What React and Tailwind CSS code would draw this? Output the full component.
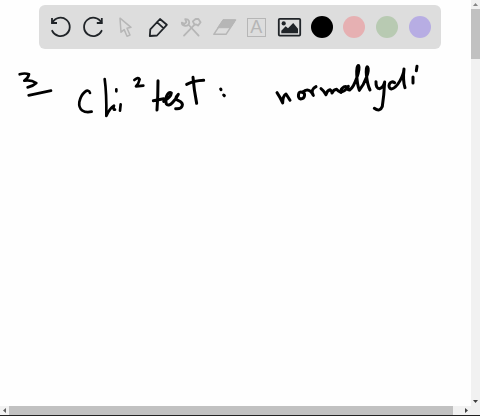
import React from "react";

const muted = "text-[#b6b6b6]";
const dark = "text-[#202428]";

function Icon({ children }) {
  return (
    <svg
      viewBox="0 0 24 24"
      className="size-6 overflow-visible"
      fill="none"
      stroke="currentColor"
      strokeWidth="1.8"
      strokeLinecap="round"
      strokeLinejoin="round"
      aria-hidden="true"
    >
      {children}
    </svg>
  );
}

function Tool({ label, tone = dark, children }) {
  return (
    <button type="button" aria-label={label} className={`flex size-6 shrink-0 items-center justify-center ${tone}`}>
      {children}
    </button>
  );
}

function Swatch({ label, color }) {
  return (
    <button type="button" aria-label={label} className="flex size-6 shrink-0 items-center justify-center">
      <span className={`size-[22px] rounded-full ${color}`} />
    </button>
  );
}

function Toolbar() {
  return (
    <div role="toolbar" aria-label="Drawing tools" className="flex h-11 items-center justify-between rounded-md bg-[#dddddd] px-[9px]">
      <Tool label="Undo">
        <Icon>
          <path d="M4 3v5h5" strokeLinecap="butt" strokeLinejoin="miter" />
          <path d="M4.4 7.6A9.2 9.2 0 1 1 4.2 15.8" />
        </Icon>
      </Tool>
      <Tool label="Redo">
        <Icon>
          <path d="M20.8 3v5h-5" strokeLinecap="butt" strokeLinejoin="miter" />
          <path d="M20.4 7.6A9.2 9.2 0 1 0 20.6 15.8" />
        </Icon>
      </Tool>
      <Tool label="Select" tone={muted}>
        <Icon>
          <path d="M7 3.2 18 12.3 14 13.3 17 20 14 21.2 11.2 14.6 8 17.2Z" strokeWidth="1.5" />
        </Icon>
      </Tool>
      <Tool label="Pen">
        <Icon>
          <path d="M3.8 21 4.3 14.3 14 4 20.8 9.8 11 20.5ZM10.9 7.2l6.8 6.2" />
        </Icon>
      </Tool>
      <Tool label="Tools" tone={muted}>
        <Icon>
          <g strokeWidth="1.8">
            <path d="M6.2 4.2C10 3.8 11.2 7.4 9.4 9.6 7.2 12 3 10.8 2.8 7.6L5.6 8.8 7.4 7.2Z" />
            <path d="M9.8 10 19.6 20.6" />
            <path d="M13.8 6.4 16.6 4H19.4L21.6 7.2 19 10.6 17.2 9.4 15.6 9.6Z" />
            <path d="M15.6 9.6 5 20.6" />
          </g>
        </Icon>
      </Tool>
      <Tool label="Eraser" tone={muted}>
        <Icon>
          <path d="M11.4 4.9H23.5L14 19.3H1.8Z" strokeWidth="1.5" />
          <path d="M11.4 4.9H23.5L18.4 12.7H6.2Z" fill="currentColor" strokeWidth="1" />
        </Icon>
      </Tool>
      <Tool label="Text" tone={muted}>
        <span className="flex size-[19px] items-center justify-center border border-[#b6b6b6] font-['Liberation_Sans',Arial,sans-serif] text-lg leading-4 font-medium">
          A
        </span>
      </Tool>
      <Tool label="Image">
        <Icon>
          <rect x="1.8" y="3.8" width="21.4" height="16.8" rx="1" />
          <circle cx="6.7" cy="8.4" r="2.1" fill="currentColor" stroke="none" />
          <path d="M4.3 18.3V15.7L8.7 11.3 11 13.3 16.2 8 21 13.7V18.3Z" fill="currentColor" stroke="none" />
        </Icon>
      </Tool>
      <Swatch label="Black" color="bg-black" />
      <Swatch label="Pink" color="bg-[#e6b0b2]" />
      <Swatch label="Green" color="bg-[#b8cab2]" />
      <Swatch label="Purple" color="bg-[#b7ade3]" />
    </div>
  );
}

function Ink() {
  return (
    <svg
      role="img"
      aria-label="3, chi² test: normally di"
      className="min-h-0 w-full flex-1"
      fill="none"
      stroke="#000"
      strokeWidth="9"
      strokeLinecap="round"
      strokeLinejoin="round"
    >
      <g transform="translate(10 11) scale(0.33333)" strokeWidth="8">
        <path d="M29 43Q45 38 57 43Q54 55 43 62Q62 58 79 69Q70 78 53 82M56 106L123 92" />
        <path d="M240 99C236 82 214 98 208 126C205 150 222 160 245 155" />
        <path d="M284 57Q290 100 289 168Q299 145 312 137Q308 150 315 149M332 133L330 152M319 88V94" />
      </g>
      <g transform="translate(125 11) scale(0.33333)">
        <path d="M28 60Q40 50 44 58Q41 72 33 79L55 77" strokeWidth="8" />
        <path d="M99 62Q99 110 96 150M85 122L116 116" />
        <path d="M116 124Q138 112 139 99C128 92 118 118 124 132C132 144 151 121 160 103Q146 117 159 121C181 130 173 148 152 146" />
        <path d="M204 52Q207 90 215 130M185 73Q208 62 236 61M287 87L288 89M296 105L298 107" />
      </g>
      <g transform="translate(265 6) scale(0.33333)">
        <path d="M36 113Q45 126 53 144Q53 123 63 117Q69 126 75 136" />
        <path d="M112 112C99 105 96 130 107 132C121 131 122 114 112 112L122 106Q135 102 145 121Q135 104 153 95" />
        <path d="M168 101Q177 108 183 119Q186 106 195 104Q200 106 201 114Q206 104 215 103Q218 107 228 112" />
        <path d="M246 96C237 90 222 107 230 110C239 109 246 101 250 94Q245 106 254 105C270 94 286 42 281 32C272 28 274 82 283 106C299 87 315 46 308 36C300 32 304 83 315 105" />
        <path d="M333 80Q332 101 344 101Q355 97 359 81Q357 121 352 154Q345 172 328 160" />
        <path d="M389 83C374 73 365 98 379 102C398 99 416 60 417 42Q413 77 420 98M444 66V84M456 34L454 47" />
      </g>
    </svg>
  );
}

export default function App() {
  return (
    <div className="flex h-screen flex-col border-b border-[#222222] bg-[#fefefe]">
      <div className="flex min-h-0 flex-1">
        <main className="flex min-w-0 flex-1 flex-col">
          <div className="pt-[5px] pr-[30px] pl-[39px]">
            <Toolbar />
          </div>
          <Ink />
        </main>
        <div className="flex w-[9px] flex-col items-center bg-[#f1f1f1]">
          <svg viewBox="0 0 9 9" className="size-[9px]" fill="#858585" aria-hidden="true">
            <path d="M2 6 4.5 3 7 6Z" />
          </svg>
          <div className="flex min-h-0 w-full flex-1 flex-col">
            <div className="h-[13%] w-full bg-[#c1c1c1]" />
          </div>
          <svg viewBox="0 0 9 9" className="size-[9px]" fill="#404040" aria-hidden="true">
            <path d="M2 3 4.5 6 7 3Z" />
          </svg>
        </div>
      </div>
      <div className="flex h-[9px] items-center bg-[#f1f1f1]">
        <svg viewBox="0 0 9 9" className="size-[9px]" fill="#606060" aria-hidden="true">
          <path d="M6 2 3 4.5 6 7Z" />
        </svg>
        <div className="h-full min-w-0 flex-1">
          <div className="h-full w-[98%] bg-[#c1c1c1]" />
        </div>
        <svg viewBox="0 0 9 9" className="size-[9px]" fill="#404040" aria-hidden="true">
          <path d="M3 2 6 4.5 3 7Z" />
        </svg>
        <div className="w-[9px]" />
      </div>
    </div>
  );
}
